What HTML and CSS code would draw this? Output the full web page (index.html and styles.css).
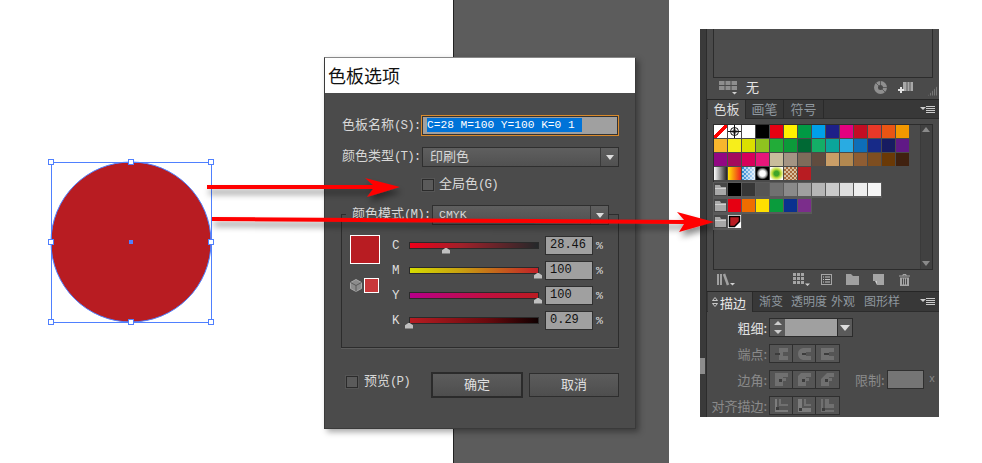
FILE: index.html
```html
<!DOCTYPE html>
<html lang="zh">
<head>
<meta charset="utf-8">
<title>色板选项</title>
<link rel="stylesheet" href="styles.css">
</head>
<body>
<div class="canvas">
  <div class="backdrop"></div>

  <svg class="artboard" width="170" height="170" viewBox="0 0 170 170">
    <circle class="art-circle" cx="85" cy="85" r="80"/>
    <rect class="art-box" x="5.5" y="5.5" width="160" height="160"/>
    <g class="art-handles">
      <rect x="2.5" y="2.5" width="5" height="5"/><rect x="82.5" y="2.5" width="5" height="5"/><rect x="162.5" y="2.5" width="5" height="5"/>
      <rect x="2.5" y="82.5" width="5" height="5"/><rect x="162.5" y="82.5" width="5" height="5"/>
      <rect x="2.5" y="162.5" width="5" height="5"/><rect x="82.5" y="162.5" width="5" height="5"/><rect x="162.5" y="162.5" width="5" height="5"/>
    </g>
    <rect class="art-centre" x="83" y="83" width="4" height="4"/>
  </svg>

  <section class="dialog">
    <h1 class="dialog-title">色板选项</h1>
    <div class="dialog-body">
      <div class="row">
        <label class="row-label">色板名称<span class="lat">(S):</span></label>
        <div class="name-field"><span class="name-sel">C=28 M=100 Y=100 K=0 1</span></div>
      </div>
      <div class="row row-type">
        <label class="row-label">颜色类型<span class="lat">(T):</span></label>
        <div class="select select-type"><span class="select-text">印刷色</span><span class="select-arrow"></span></div>
      </div>
      <div class="row row-check">
        <span class="check"></span><span class="check-label">全局色<span class="lat">(G)</span></span>
      </div>
      <div class="group">
        <div class="legend">
          <span class="legend-label">颜色模式<span class="lat">(M):</span></span>
          <div class="select select-mode"><span class="select-text lat-big">CMYK</span><span class="select-arrow"></span></div>
        </div>
        <div class="group-body">
          <div class="swatch-col">
            <div class="big-swatch"></div>
            <div class="gamut">
              <svg class="cube" width="12" height="13" viewBox="0 0 12 13"><path d="M6 .5 11.500 3.500V9.500L6 12.500.5 9.500V3.500Z" fill="#8c8c8c" stroke="#a8a8a8"/><path d="M.5 3.500 6 6.500 11.500 3.500M6 6.500V12.500" fill="none" stroke="#5a5a5a"/></svg>
              <div class="small-swatch"></div>
            </div>
          </div>
          <div class="sliders">
            <div class="slider">
              <span class="slider-name">C</span>
              <div class="track track-c"><span class="thumb" style="left:36px"></span></div>
              <div class="num">28.46</div><span class="pct">%</span>
            </div>
            <div class="slider">
              <span class="slider-name">M</span>
              <div class="track track-m"><span class="thumb" style="left:128px"></span></div>
              <div class="num">100</div><span class="pct">%</span>
            </div>
            <div class="slider">
              <span class="slider-name">Y</span>
              <div class="track track-y"><span class="thumb" style="left:128px"></span></div>
              <div class="num">100</div><span class="pct">%</span>
            </div>
            <div class="slider">
              <span class="slider-name">K</span>
              <div class="track track-k"><span class="thumb" style="left:-1px"></span></div>
              <div class="num">0.29</div><span class="pct">%</span>
            </div>
          </div>
        </div>
      </div>
      <div class="dialog-foot">
        <span class="check check-preview"></span>
        <span class="check-label preview-label">预览<span class="lat">(P)</span></span>
        <button class="btn btn-default">确定</button>
        <button class="btn btn-cancel">取消</button>
      </div>
    </div>
  </section>

  <aside class="panel">
    <div class="gutter"><span class="gutter-thumb"></span></div>
    <div class="panel-main">
      <div class="preview-box"></div>
      <div class="preview-foot">
        <svg width="19" height="15" viewBox="0 0 19 15"><path d="M0 1h18v9H0z" fill="#8d8d8d"/><path d="M0 5.500h18M6 1v9M12 1v9" stroke="#4a4a4a"/><path d="M13 12h5l-2.500 2.500z" fill="#d0d0d0"/></svg>
        <span class="none-label">无</span>
        <svg class="foot-disc" width="13" height="13" viewBox="0 0 13 13"><circle cx="6.500" cy="6.500" r="6.500" fill="#8f8f8f"/><circle cx="6.500" cy="6.500" r="2.500" fill="#4a4a4a"/><path d="M6.500 0v4M13 6.500H9M2 2l3 3M11 11 8 8" stroke="#5c5c5c"/></svg>
        <svg class="foot-new" width="16" height="13" viewBox="0 0 16 13"><path d="M5 1h10v9H5z" fill="#a8a8a8"/><path d="M9 1v9M12 1v9" stroke="#5a5a5a"/><path d="M3 6v6M0 9h6" stroke="#e2e2e2" stroke-width="2"/></svg>
        <span class="grip"></span>
      </div>
      <div class="tabs">
        <span class="tab tab-on">色板</span><span class="tab">画笔</span><span class="tab">符号</span>
        <span class="menu"></span>
      </div>
      <div class="swatch-box">
        <div class="swatch-list">
          <div class="sw-row">
            <span class="sw sw-none"></span>
            <span class="sw sw-reg"><svg width="13" height="13" viewBox="0 0 13 13"><circle cx="6.500" cy="6.500" r="4" fill="none" stroke="#111"/><circle cx="6.500" cy="6.500" r="1.800" fill="none" stroke="#111"/><path d="M6.500 0v13M0 6.500h13" stroke="#111"/></svg></span>
            <span class="sw" style="background:#fff"></span><span class="sw" style="background:#000"></span><span class="sw" style="background:#e60012"></span><span class="sw" style="background:#fff100"></span><span class="sw" style="background:#009944"></span><span class="sw" style="background:#00a0e9"></span><span class="sw" style="background:#1d2088"></span><span class="sw" style="background:#e4007f"></span><span class="sw" style="background:#c30d23"></span><span class="sw" style="background:#e83828"></span><span class="sw" style="background:#ea5514"></span><span class="sw" style="background:#f39800"></span>
          </div>
          <div class="sw-row">
            <span class="sw" style="background:#f8b62d"></span><span class="sw" style="background:#f7ee1b"></span><span class="sw" style="background:#dadf00"></span><span class="sw" style="background:#8fc31f"></span><span class="sw" style="background:#22ac38"></span><span class="sw" style="background:#0c9a3a"></span><span class="sw" style="background:#006934"></span><span class="sw" style="background:#14ae67"></span><span class="sw" style="background:#0ba59b"></span><span class="sw" style="background:#29abe2"></span><span class="sw" style="background:#0e6eb8"></span><span class="sw" style="background:#172a88"></span><span class="sw" style="background:#171c61"></span><span class="sw" style="background:#601986"></span>
          </div>
          <div class="sw-row">
            <span class="sw" style="background:#920783"></span><span class="sw" style="background:#a40b5d"></span><span class="sw" style="background:#d7005a"></span><span class="sw" style="background:#e5177a"></span><span class="sw" style="background:#c9bc9c"></span><span class="sw" style="background:#a49484"></span><span class="sw" style="background:#7e6b5a"></span><span class="sw" style="background:#604c3f"></span><span class="sw" style="background:#ca9e67"></span><span class="sw" style="background:#b28850"></span><span class="sw" style="background:#8f5d33"></span><span class="sw" style="background:#7e4e20"></span><span class="sw" style="background:#6a3906"></span><span class="sw" style="background:#40210f"></span>
          </div>
          <div class="sw-row">
            <span class="sw sw-g1"></span><span class="sw sw-g2"></span><span class="sw sw-g3"></span><span class="sw sw-g4"></span><span class="sw sw-g5"></span><span class="sw sw-g6"></span><span class="sw" style="background:#b81c22"></span>
          </div>
          <div class="sw-row sw-group">
            <span class="sw sw-folder"><svg width="13" height="13" viewBox="0 0 13 13"><path d="M1 2h5l1 2h5v8H1z" fill="#a8a8a8"/><path d="M1 5h11v1H1z" fill="#d0d0d0"/></svg></span><span class="sw" style="background:#000"></span><span class="sw" style="background:#373737"></span><span class="sw" style="background:#555"></span><span class="sw" style="background:#707070"></span><span class="sw" style="background:#8a8a8a"></span><span class="sw" style="background:#a0a0a0"></span><span class="sw" style="background:#b6b6b6"></span><span class="sw" style="background:#cacaca"></span><span class="sw" style="background:#dedede"></span><span class="sw" style="background:#eeeeee"></span><span class="sw" style="background:#f6f6f6"></span>
          </div>
          <div class="sw-row sw-group">
            <span class="sw sw-folder"><svg width="13" height="13" viewBox="0 0 13 13"><path d="M1 2h5l1 2h5v8H1z" fill="#a8a8a8"/><path d="M1 5h11v1H1z" fill="#d0d0d0"/></svg></span><span class="sw" style="background:#e60012"></span><span class="sw" style="background:#ef6c00"></span><span class="sw" style="background:#ffdf00"></span><span class="sw" style="background:#0a9b3c"></span><span class="sw" style="background:#0a318f"></span><span class="sw" style="background:#7b2d8b"></span>
          </div>
          <div class="sw-row sw-group">
            <span class="sw sw-folder"><svg width="13" height="13" viewBox="0 0 13 13"><path d="M1 2h5l1 2h5v8H1z" fill="#a8a8a8"/><path d="M1 5h11v1H1z" fill="#d0d0d0"/></svg></span>
            <span class="sw sw-new"><svg width="13" height="13" viewBox="0 0 13 13"><path d="M1.500 1.500h10v5l-5 5h-5z" fill="#b81c22" stroke="#000" stroke-width="1.500"/></svg></span>
          </div>
        </div>
        <div class="scroll"><span class="scroll-up"></span><span class="scroll-down"></span></div>
      </div>
      <div class="swatch-foot">
        <svg class="ic-lib" width="18" height="13" viewBox="0 0 18 13"><path d="M1 1v11M4 1v11" stroke="#a0a0a0" stroke-width="2"/><path d="M7 1l4 11" stroke="#a0a0a0" stroke-width="2.500"/><path d="M13 10h5l-2.500 2.500z" fill="#d0d0d0"/></svg>
        <svg class="ic-grid" width="17" height="13" viewBox="0 0 17 13"><path d="M0 0h11v11H0z" fill="#a5a5a5"/><path d="M3.500 0v11M7.500 0v11M0 3.500h11M0 7.500h11" stroke="#4a4a4a"/><path d="M12 10.500h5L14.500 13z" fill="#d0d0d0"/></svg>
        <svg class="ic" width="11" height="11" viewBox="0 0 11 11"><rect x=".5" y=".5" width="10" height="10" fill="#4a4a4a" stroke="#a5a5a5"/><path d="M2 3h1M4 3h5M2 5.500h1M4 5.500h5M2 8h1M4 8h5" stroke="#c0c0c0"/></svg>
        <svg class="ic" width="13" height="11" viewBox="0 0 13 11"><path d="M0 0h5l2 2h6v9H0z" fill="#a0a0a0"/></svg>
        <svg class="ic" width="11" height="11" viewBox="0 0 11 11"><path d="M0 0h11v11H4V7H0z" fill="#a5a5a5"/><path d="M2 7h2v4z" fill="#d0d0d0"/></svg>
        <svg class="ic" width="13" height="12" viewBox="0 0 13 12"><path d="M1 2h11M5 2V.5h3V2" fill="none" stroke="#a5a5a5"/><path d="M2 3.500h9V12H2z" fill="#a5a5a5"/><path d="M4.500 4.500v6M6.500 4.500v6M8.500 4.500v6" stroke="#4a4a4a"/></svg>
      </div>
      <div class="tabs tabs-stroke">
        <span class="tab tab-on tab-stroke"><svg class="updown" width="6" height="10" viewBox="0 0 6 10"><path d="M3 .5 5.500 3.500H.5zM3 9.500 .5 6.500h5z" fill="none" stroke="#c8c8c8"/></svg>描边</span>
        <span class="tab-text t1">渐变</span><span class="tab-text t2">透明度</span><span class="tab-text t3">外观</span><span class="tab-text t4">图形样</span>
        <span class="menu"></span>
      </div>
      <div class="stroke-form">
        <div class="s-row s-weight">
          <span class="s-label s-on">粗细:</span>
          <div class="spinner"><span class="spin-up"></span><span class="spin-down"></span></div>
          <div class="s-input"></div>
          <div class="s-drop"></div>
        </div>
        <div class="s-row">
          <span class="s-label">端点:</span>
          <div class="seg">
            <span class="seg-btn"><svg width="13" height="12" viewBox="0 0 13 12"><path d="M4 0h9v4H8v4h5v4H4z" fill="#707070"/><path d="M0 5h5v2H0z" fill="#3c3c3c"/></svg></span>
            <span class="seg-btn"><svg width="13" height="12" viewBox="0 0 13 12"><path d="M5 0h8v4H8v4h5v4H5Q0 11 0 6T5 0z" fill="#707070"/><path d="M4 5h4v2H4z" fill="#3c3c3c"/></svg></span>
            <span class="seg-btn"><svg width="13" height="12" viewBox="0 0 13 12"><path d="M0 0h13v4H8v4h5v4H0z" fill="#707070"/><path d="M3 5h5v2H3z" fill="#3c3c3c"/></svg></span>
          </div>
        </div>
        <div class="s-row">
          <span class="s-label">边角:</span>
          <div class="seg">
            <span class="seg-btn"><svg width="13" height="13" viewBox="0 0 13 13"><path d="M0 0h13v4H8v1h3v3H8v5H0z" fill="#707070"/><path d="M4 6h3v3H4z" fill="#3c3c3c"/></svg></span>
            <span class="seg-btn"><svg width="13" height="13" viewBox="0 0 13 13"><path d="M3 0h10v4H8v1h3v3H8v5H0V3z" fill="#707070"/><path d="M4 6h3v3H4z" fill="#3c3c3c"/></svg></span>
            <span class="seg-btn"><svg width="13" height="13" viewBox="0 0 13 13"><path d="M6 0h7v4H8v1h3v3H8v5H0V6z" fill="#707070"/><path d="M4 6h3v3H4z" fill="#3c3c3c"/></svg></span>
          </div>
          <span class="s-label s-limit">限制:</span>
          <div class="s-limit-input"></div>
          <span class="s-x">x</span>
        </div>
        <div class="s-row">
          <span class="s-label">对齐描边:</span>
          <div class="seg">
            <span class="seg-btn"><svg width="13" height="13" viewBox="0 0 13 13"><path d="M0 0h2v11h11v2H0z" fill="#7c7c7c"/><path d="M4 0h2v5h7v2H4z" fill="#707070"/><path d="M1 8h3v3H1z" fill="#3c3c3c"/></svg></span>
            <span class="seg-btn"><svg width="13" height="13" viewBox="0 0 13 13"><path d="M0 0h4v9h9v4H0z" fill="#7c7c7c"/><path d="M6 0h2v5h5v2H6z" fill="#707070"/><path d="M1 9h3v3H1z" fill="#3c3c3c"/></svg></span>
            <span class="seg-btn"><svg width="13" height="13" viewBox="0 0 13 13"><path d="M0 0h2v11h11v2H0zM4 0h4v5h5v4H4z" fill="#707070"/><path d="M1 9h3v3H1z" fill="#3c3c3c"/></svg></span>
          </div>
        </div>
      </div>
    </div>
  </aside>

  <svg class="arrows" width="982" height="463" viewBox="0 0 982 463">
    <defs>
      <filter id="soft" x="-5%" y="-100%" width="110%" height="400%">
        <feDropShadow dx="2" dy="5" stdDeviation="3" flood-color="#000" flood-opacity=".45"/>
      </filter>
    </defs>
    <g filter="url(#soft)" fill="#f00">
      <path d="M207 185 373 185 365 178 400 187 367 197 373 189 207 189Z"/>
      <path d="M212 217 684 220 677 212 714 222 679 232 684 224 212 221Z"/>
    </g>
  </svg>
</div>
</body>
</html>
```

FILE: styles.css
```css
* { box-sizing: border-box; }
html, body { margin: 0; padding: 0; background: #fff; }
body { font-family: "Noto Sans CJK SC", "Liberation Sans", sans-serif; }

.canvas { position: relative; width: 982px; height: 463px; overflow: hidden; background: #fff; }

.backdrop {
  position: absolute; left: 453px; top: 0; width: 216px; height: 463px;
  background: #5c5c5c; border-left: 1px solid #222;
}

/* artwork */
.artboard { position: absolute; left: 46px; top: 157px; }
.art-circle { fill: #b81c22; stroke: #4f80ff; stroke-width: 1; }
.art-box { fill: none; stroke: #4f80ff; stroke-width: 1; shape-rendering: crispEdges; }
.art-handles rect { fill: #fff; stroke: #4f80ff; stroke-width: 1; shape-rendering: crispEdges; }
.art-centre { fill: #4f80ff; }

.arrows { position: absolute; left: 0; top: 0; pointer-events: none; }

/* dialog */
.dialog {
  position: absolute; left: 324px; top: 57px; width: 312px; height: 372px;
  background: #4b4b4b; border: 1px solid #3a3a3a; border-top-color: #888;
  box-shadow: 3px 3px 6px rgba(0, 0, 0, .35);
}
.dialog-title {
  margin: 0; height: 35px; padding-left: 3px; background: #fff; color: #111;
  font-size: 18px; font-weight: 400; line-height: 34px;
}
.dialog-body { padding: 22px 16px 0 16px; color: #d8d8d8; font-size: 13px; line-height: 20px; }
.lat { font-family: "Liberation Mono", monospace; font-size: 12.500px; line-height: 1; letter-spacing: -.9px; }
.lat-big { font-family: "Liberation Mono", monospace; font-size: 11.500px; line-height: 1; }

.row { display: flex; align-items: center; height: 21px; }
.row-label { width: 80px; flex: none; margin-bottom: 4px; padding-left: 1px; white-space: nowrap; }
.name-field {
  width: 199px; height: 21px; padding: 2px 5px; background: #a0a0a0;
  border: 1px solid #d98a2b; box-shadow: inset 0 0 0 1px #333;
}
.name-sel {
  display: block; width: 155px; height: 14px; background: #0073d8; color: #fff;
  font-family: "Liberation Mono", monospace; font-size: 11.200px; line-height: 14px; white-space: nowrap;
}
.row-type { height: 20px; margin-top: 11px; }
.select {
  display: flex; align-items: center; height: 20px;
  background: linear-gradient(#5f5f5f, #515151); border: 1px solid #2f2f2f;
}
.select-type { width: 197px; margin-left: 1px; }
.select-text { flex: 1; margin-bottom: 2px; padding-left: 7px; color: #d8d8d8; }
.select-arrow {
  position: relative; flex: none; width: 18px; height: 18px; border-left: 1px solid #3a3a3a;
}
.select-arrow::after {
  content: ""; position: absolute; left: 5px; top: 7px;
  border: 4px solid transparent; border-top: 5px solid #ddd; border-bottom: 0;
}
.row-check { height: 12px; margin: 12px 0 0 81px; }
.check {
  flex: none; display: block; width: 12px; height: 12px; background: #5a5a5a;
  border: 1px solid #2b2b2b; box-shadow: 0 0 0 1px #555;
}
.check-label { margin: 0 0 4px 5px; white-space: nowrap; }

.group {
  height: 134px; margin-top: 23px; border: 1px solid #2c2c2c;
  box-shadow: 0 1px 0 #5c5c5c;
}
.legend {
  display: flex; align-items: center; height: 20px; margin: -10px 9px 0 4px;
  padding-left: 6px; background: #4b4b4b;
}
.legend-label { width: 80px; flex: none; margin-bottom: 4px; white-space: nowrap; }
.select-mode { flex: 1; }
.select-mode .select-text { margin-bottom: 0; padding-left: 6px; }
.group-body { display: flex; padding: 10px 0 0 8px; }
.swatch-col { width: 31px; flex: none; }
.big-swatch { width: 30px; height: 29px; background: #b81c22; border: 1px solid #fff; }
.gamut { display: flex; align-items: center; gap: 2px; margin-top: 14px; }
.small-swatch { width: 15px; height: 15px; background: #c8383a; border: 1px solid #fff; }
.sliders { display: flex; flex-direction: column; gap: 6px; margin: 1px 0 0 11px; }
.slider { display: flex; align-items: center; height: 19px; }
.slider-name { width: 17px; flex: none; margin-top: 2px; color: #ddd; font-family: "Liberation Mono", monospace; font-size: 12.500px; line-height: 19px; }
.track { position: relative; width: 130px; height: 7px; margin-top: -1px; border: 1px solid #2a2a2a; }
.track-c { background: linear-gradient(90deg, #f0001a, #a0212a 40%, #24282a); }
.track-m { background: linear-gradient(90deg, #d6dc00, #c8a010 40%, #c22028); }
.track-y { background: linear-gradient(90deg, #b8008a, #c01040 60%, #bc1c22); }
.track-k { background: linear-gradient(90deg, #b81c22, #6a0a0e 60%, #100000); }
.thumb {
  position: absolute; top: 5px; width: 8px; height: 6px; margin-left: -4px;
  background: #c0c0c0; clip-path: polygon(50% 0, 100% 45%, 100% 100%, 0 100%, 0 45%);
}
.num {
  width: 48px; height: 19px; margin-left: 6px; padding-left: 4px; background: #a0a0a0;
  border: 1px solid #2f2f2f; color: #111;
  font-family: "Liberation Mono", monospace; font-size: 12px; line-height: 16px;
}
.pct { margin-left: 3px; font-family: "Liberation Mono", monospace; font-size: 11.500px; line-height: 19px; color: #ddd; }

.dialog-foot { display: flex; align-items: center; margin: 24px 0 0 5px; height: 26px; }
.check-preview { margin-top: -6px; }
.preview-label { margin: -6px 0 0 6px; padding-bottom: 4px; width: 67px; }
.btn {
  height: 24px; padding: 0 0 3px; color: #e0e0e0; font: inherit; line-height: 18px;
  background: linear-gradient(#5c5c5c, #4e4e4e); border: 1px solid #2e2e2e;
}
.btn-default { width: 92px; height: 26px; border: 2px solid #2b2b2b; }
.btn-cancel { width: 90px; margin-left: 6px; }

/* right panel */
.panel {
  position: absolute; left: 700px; top: 29px; width: 239px; height: 388px;
  display: flex; background: #4a4a4a; overflow: hidden; color: #c8c8c8;
}
.gutter { position: relative; flex: none; width: 7px; background: #3a3a3a; border-right: 1px solid #2c2c2c; }
.gutter-thumb { position: absolute; left: 0; top: 329px; width: 5px; height: 16px; background: #8c8c8c; }
.panel-main { flex: 1; min-width: 0; display: flex; flex-direction: column; }
.preview-box {
  flex: none; height: 49px; margin: 0 6px; background: #4d4d4d;
  border: 1px solid #2c2c2c; border-top: 0;
}
.preview-foot { flex: none; display: flex; align-items: center; height: 21px; padding: 0 0 3px 12px; }
.none-label { margin-left: 8px; font-size: 13px; line-height: 16px; color: #e4e4e4; }
.foot-disc { margin-left: 115px; }
.foot-new { margin-left: 11px; }
.grip {
  width: 10px; height: 10px; margin: 7px 0 0 14px;
  background: repeating-linear-gradient(90deg, #777 0 1px, transparent 1px 2px);
  clip-path: polygon(100% 0, 100% 100%, 0 100%);
}
.tabs {
  flex: none; position: relative; display: flex; height: 20px; padding-left: 1px;
  background: #383838; border-top: 1px solid #262626; box-shadow: inset 0 -1px 0 #2c2c2c;
}
.tab {
  display: block; width: 38px; padding-top: 0; text-align: center; font-size: 13px; line-height: 17px;
  color: #8f979e; border-right: 1px solid #2a2a2a;
}
.tab:nth-child(3) { width: 40px; }
.tab-on { background: #4a4a4a; color: #dedede; position: relative; z-index: 1; }
.menu {
  position: absolute; right: 4px; top: 6px; width: 9px; height: 7px;
  background: repeating-linear-gradient(#ccc 0 1px, transparent 1px 2px);
}
.menu::before {
  content: ""; position: absolute; left: -6px; top: 1px;
  border: 3px solid transparent; border-top: 3px solid #ccc; border-bottom: 0;
}
.swatch-box {
  flex: none; display: flex; height: 146px; margin: 5px 6px 0; background: #4a4a4a;
  border: 1px solid #2c2c2c;
}
.swatch-list { flex: 1; min-width: 0; }
.sw-row { display: flex; gap: 1px; height: 14px; }
.sw-group { width: max-content; margin-top: 2px; outline: 1px solid #5a5a5a; background: #5a5a5a; }
.sw-row:nth-child(4) { margin-bottom: 1px; }
.sw { display: block; flex: none; width: 13px; height: 13px; }
.sw svg { display: block; }
.sw-none { background: linear-gradient(135deg, #fff 42%, #f00 42% 58%, #fff 58%); }
.sw-reg { background: #fff; }
.sw-g1 { background: linear-gradient(90deg, #fff, #222); }
.sw-g2 { background: linear-gradient(90deg, #ffe600, #f02020); }
.sw-g3 {
  background: repeating-conic-gradient(rgba(255, 255, 255, .6) 0 25%, transparent 0 50%) 0 0 / 4px 4px,
    linear-gradient(90deg, #1f7fd0, #cfe4f6);
}
.sw-g4 { background: radial-gradient(circle, #fff 30%, #999 48%, #000 66%); }
.sw-g5 { background: radial-gradient(circle, #3fa52a 25%, #c8e040 50%, #fff 85%); }
.sw-g6 { background: repeating-conic-gradient(#a86a3c 0 25%, #d8c0a0 0 50%) 0 0 / 4px 4px; }
.sw-folder { background: #474747; }
.sw-new { background: #fff; }
.scroll { position: relative; flex: none; width: 12px; background: #414141; border-left: 1px solid #3a3a3a; }
.scroll-up, .scroll-down { position: absolute; left: 1px; border: 4px solid transparent; }
.scroll-up { top: 2px; border-bottom: 5px solid #8a8a8a; border-top: 0; }
.scroll-down { bottom: 3px; border-top: 5px solid #8a8a8a; border-bottom: 0; }
.swatch-foot { flex: none; display: flex; align-items: center; height: 21px; padding: 0 0 2px 10px; }
.swatch-foot svg { display: block; flex: none; }
.ic-grid { margin-left: 58px; }
.ic { margin-left: 14px; }
.ic-lib + .ic-grid + .ic { margin-left: 11px; }
.tabs-stroke { height: 21px; }
.tab-stroke { display: flex; align-items: center; gap: 2px; width: 45px; padding: 0 0 0 4px; color: #e8e8e8; }
.tab-text { position: absolute; top: 0; font-size: 12px; line-height: 17px; color: #8f979e; white-space: nowrap; }
.t1 { left: 52px; }
.t2 { left: 84px; }
.t3 { left: 124px; }
.t4 { left: 157px; }
.stroke-form { flex: 1; display: flex; flex-direction: column; gap: 7px; padding-top: 6px; }
.s-row { display: flex; align-items: center; height: 19px; }
.s-label { width: 62px; flex: none; padding-right: 2px; text-align: right; font-size: 13px; line-height: 16px; color: #8a8a8a; white-space: nowrap; }
.s-on { color: #e0e0e0; }
.spinner {
  display: flex; flex-direction: column; justify-content: space-around; align-items: center;
  width: 16px; height: 19px; background: #5a5a5a; border: 1px solid #2c2c2c; border-right: 0;
}
.spin-up { border: 4px solid transparent; border-bottom: 4px solid #ccc; border-top: 0; }
.spin-down { border: 4px solid transparent; border-top: 4px solid #ccc; border-bottom: 0; }
.s-input { width: 52px; height: 19px; background: #a0a0a0; border: 1px solid #2c2c2c; border-width: 1px 0; }
.s-drop { position: relative; width: 16px; height: 19px; background: #5a5a5a; border: 1px solid #2c2c2c; }
.s-drop::after {
  content: ""; position: absolute; left: 2px; top: 6px;
  border: 5px solid transparent; border-top: 6px solid #ddd; border-bottom: 0;
}
.seg { display: flex; height: 19px; border: 1px solid #2f2f2f; }
.seg-btn {
  display: flex; align-items: center; justify-content: center; width: 23px;
  background: #555; border-right: 1px solid #2f2f2f;
}
.seg-btn:last-child { border-right: 0; }
.s-limit { width: 30px; margin-left: 15px; padding-right: 0; text-align: left; }
.s-limit-input { width: 37px; height: 19px; margin-left: 2px; background: #757575; border: 1px solid #2f2f2f; }
.s-x { margin-left: 5px; font-family: "Liberation Mono", monospace; font-size: 10px; color: #8a8a8a; }
```
